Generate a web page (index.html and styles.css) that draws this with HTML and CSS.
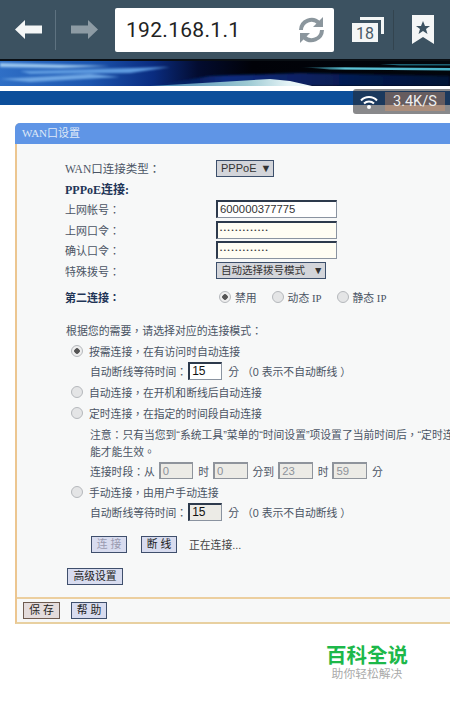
FILE: index.html
```html
<!DOCTYPE html>
<html lang="zh-Hant">
<head>
<meta charset="utf-8">
<title>WAN口设置</title>
<link rel="stylesheet" href="styles.css">
</head>
<body>
<header class="toolbar">
  <svg class="nav-icon" width="27" height="19" viewBox="0 0 27 19"><path d="M0 9.500 10 0V5.500H27V13.500H10V19Z" fill="#f4f6f6"/></svg>
  <div class="sep"></div>
  <svg class="nav-icon" width="27" height="19" viewBox="0 0 27 19"><path d="M27 9.500 17 0V5.500H0V13.500H17V19Z" fill="#8d9ba4"/></svg>
  <div class="url-box">
    <span class="url">192.168.1.1</span>
    <svg class="reload" width="27" height="28" viewBox="0 0 27 28"><path d="M3 14A10.500 10.500 0 0 1 21 7" fill="none" stroke="#8b969d" stroke-width="4"/><path d="M24 14A10.500 10.500 0 0 1 6 21" fill="none" stroke="#8b969d" stroke-width="4"/><path d="M25 1V11H15Z" fill="#8b969d"/><path d="M2 27V17H12Z" fill="#8b969d"/></svg>
  </div>
  <div class="tabs">
    <div class="tab-back"></div>
    <div class="tab-front">18</div>
  </div>
  <div class="sep sep-dark"></div>
  <svg class="bookmark" width="22" height="29" viewBox="0 0 22 29"><path d="M0 0H22V29L11 22 0 29Z" fill="#f4f6f6"/><path d="M11 6 13 11H18L14 14 15.500 19 11 16 6.500 19 8 14 4 11H9Z" fill="#3c5261"/></svg>
</header>
<svg class="banner" width="450" height="27" viewBox="0 0 450 27">
  <defs>
    <linearGradient id="sky" x1="0" x2="1" y1="0" y2="0">
      <stop offset="0" stop-color="#2f6fc6"/>
      <stop offset=".2" stop-color="#1c55ae"/>
      <stop offset=".34" stop-color="#0a2c80"/>
      <stop offset=".44" stop-color="#030c30"/>
      <stop offset=".56" stop-color="#010208"/>
      <stop offset="1" stop-color="#02060c"/>
    </linearGradient>
    <linearGradient id="low" x1="0" x2="1" y1="0" y2="0">
      <stop offset="0" stop-color="#0a2c80" stop-opacity="0"/>
      <stop offset=".25" stop-color="#0a2c80"/>
      <stop offset="1" stop-color="#071a50" stop-opacity=".6"/>
    </linearGradient>
    <linearGradient id="teal" x1="0" x2="1" y1="0" y2="0">
      <stop offset="0" stop-color="#39a8c0" stop-opacity="0"/>
      <stop offset=".3" stop-color="#5ec4d6"/>
      <stop offset="1" stop-color="#49b3c9"/>
    </linearGradient>
    <linearGradient id="foam" x1="0" x2="1" y1="0" y2="0">
      <stop offset="0" stop-color="#3f7fb0"/>
      <stop offset=".6" stop-color="#9cc9d2"/>
      <stop offset=".85" stop-color="#e4f3f6"/>
      <stop offset="1" stop-color="#f2fafb"/>
    </linearGradient>
    <filter id="b1"><feGaussianBlur stdDeviation="1"/></filter>
    <filter id="b2"><feGaussianBlur stdDeviation=".5"/></filter>
  </defs>
  <rect width="450" height="27" fill="url(#sky)"/>
  <path d="M150 27 210 17 300 14 450 17V27Z" fill="url(#low)" filter="url(#b1)"/>
  <g filter="url(#b1)">
    <path d="M0 4 110 7 60 9 0 8Z" fill="#9cc8f0"/>
    <path d="M20 12 170 8 130 14 30 15Z" fill="#5f9be0"/>
    <path d="M0 20 90 15 120 18 30 23Z" fill="#6ea6e4"/>
  </g>
  <path d="M300 8 450 9V11.500L330 10.500Z" fill="url(#teal)" filter="url(#b2)"/>
  <path d="M380 5 450 5V6.500L400 6.500Z" fill="#1d5f70" filter="url(#b2)"/>
  <path d="M150 27 220 23 270 20 290 22 312 27Z" fill="url(#foam)" filter="url(#b2)"/>
  <rect width="450" height="2" fill="#0a0f14"/>
</svg>
<div class="navstrip"></div>
<div class="speed">
  <svg width="18" height="14" viewBox="0 0 18 14"><path d="M1 5.500A11 11 0 0 1 17 5.500M4 8.500A7 7 0 0 1 14 8.500" fill="none" stroke="#fff" stroke-width="2"/><circle cx="9" cy="12" r="2" fill="#fff"/></svg>
  <span class="speed-text">3.4K/S</span>
</div>
<main class="card">
  <h1 class="card-title">WAN口设置</h1>
  <div class="card-body">
    <div class="row row-wan"><span class="label">WAN口连接类型：</span><span class="select select-short">PPPoE ▼</span></div>
    <div class="row row-sub"><b class="label strong">PPPoE连接:</b></div>
    <div class="row row-field"><span class="label">上网帐号：</span><span class="input input-wide">600000377775</span></div>
    <div class="row row-field"><span class="label">上网口令：</span><span class="input input-wide input-cream dots">•••••••••••••</span></div>
    <div class="row row-field"><span class="label">确认口令：</span><span class="input input-wide input-cream dots">•••••••••••••</span></div>
    <div class="row row-field"><span class="label">特殊拨号：</span><span class="select select-long">自动选择拨号模式 ▼</span></div>
    <div class="row row-second">
      <b class="label strong">第二连接：</b>
      <span class="radio-group">
        <span class="radio-item"><i class="radio on"></i>禁用</span>
        <span class="radio-item"><i class="radio"></i>动态 IP</span>
        <span class="radio-item"><i class="radio"></i>静态 IP</span>
      </span>
    </div>
    <p class="intro">根据您的需要，请选择对应的连接模式：</p>
    <div class="mode"><i class="radio on"></i>按需连接，在有访问时自动连接</div>
    <div class="sub">自动断线等待时间：<span class="input input-num">15</span>分 （0 表示不自动断线 ）</div>
    <div class="mode"><i class="radio"></i>自动连接，在开机和断线后自动连接</div>
    <div class="mode"><i class="radio"></i>定时连接，在指定的时间段自动连接</div>
    <div class="sub note">注意：只有当您到“系统工具”菜单的“时间设置”项设置了当前时间后，“定时连接”功</div>
    <div class="sub note-end">能才能生效。</div>
    <div class="sub time-row">连接时段：从<span class="input input-time off">0</span>时<span class="input input-time off">0</span>分到<span class="input input-time off">23</span>时<span class="input input-time off">59</span>分</div>
    <div class="mode"><i class="radio"></i>手动连接，由用户手动连接</div>
    <div class="sub">自动断线等待时间：<span class="input input-num off-num">15</span>分 （0 表示不自动断线 ）</div>
    <div class="actions">
      <span class="btn btn-off">连 接</span>
      <span class="btn">断 线</span>
      <span class="status">正在连接...</span>
    </div>
    <div class="advanced"><span class="btn btn-adv">高级设置</span></div>
  </div>
  <div class="card-foot">
    <span class="btn btn-save">保 存</span>
    <span class="btn">帮 助</span>
  </div>
</main>
<footer class="brand">
  <div class="brand-name">百科全说</div>
  <div class="brand-sub">助你轻松解决</div>
</footer>
</body>
</html>
```
FILE: styles.css
```css
* { box-sizing: border-box; }
html, body { margin: 0; padding: 0; }
body {
  width: 450px;
  height: 711px;
  overflow: hidden;
  position: relative;
  background: #fff;
  color: #4a5464;
  font-family: "Liberation Sans", "Noto Sans CJK TC", sans-serif;
  font-size: 10.8px;
}
.toolbar {
  height: 59px;
  background: #3c5261;
  display: flex;
  align-items: center;
  padding: 0 0 0 15px;
}
.sep { width: 1px; height: 40px; background: #5e7280; margin: 0 15px 0 13px; }
.sep-dark { background: #33444f; margin: 0 18px 0 9px; }
.nav-icon { flex: none; }
.url-box {
  width: 219px;
  height: 44px;
  margin-left: 17px;
  background: #fff;
  border-radius: 2px;
  display: flex;
  align-items: center;
  justify-content: space-between;
  padding: 0 9px 0 11px;
}
.url { font-family: "Roboto", sans-serif; font-size: 21px; color: #222; letter-spacing: 0.3px; }
.tabs { position: relative; width: 32px; height: 25px; margin-left: 18px; }
.tab-back { position: absolute; top: 0; right: 0; width: 24px; height: 17px; border: 3px solid #f4f6f6; border-width: 3px 3px 0 0; }
.tab-front {
  position: absolute; left: 0; bottom: 0; width: 26px; height: 19px;
  background: #f4f6f6; color: #4a5b66; border-top: 3px solid #f4f6f6;
  box-shadow: 1px -1px 0 #3c5261;
  font: 16px/16px "Roboto", sans-serif; text-align: center;
}
.banner { display: block; }
.navstrip { height: 14px; margin-top: 5px; background: #0c4e9a; }
.speed {
  position: absolute; left: 353px; top: 89px; width: 97px; height: 25px;
  background: rgba(40, 40, 44, 0.55); border-radius: 3px 0 0 3px;
  display: flex; align-items: center; padding-left: 7px; gap: 7px;
}
.speed-text {
  flex: 1; align-self: stretch; margin: 3px 5px 3px 0; padding-left: 8px;
  background: rgba(225, 150, 100, 0.38);
  color: #efefef; font: 14.500px/19px "Roboto", sans-serif;
}
.card {
  margin: 18px 0 0 15px;
  width: 435px;
  height: 501px;
  background: #f7f8f8;
  border-left: 2px solid #ecc690;
  border-bottom: 2px solid #e8d0a0;
  border-top-left-radius: 5px;
  display: flex;
  flex-direction: column;
}
.card-title {
  margin: 0 0 0 -2px;
  height: 21px;
  padding-left: 7px;
  background: #5f95e6;
  border-top-left-radius: 5px;
  color: #dfe9f7;
  font: normal 11px/20px "Liberation Serif", "Noto Sans CJK TC", serif;
}
.card-body { flex: 1; padding: 14px 0 0 48px; white-space: nowrap; }
.row { display: flex; align-items: center; }
.label { width: 151px; flex: none; font-size: 11px; }
.strong { font-weight: 700; color: #1f3557; }
.row-wan { height: 20px; }
.row-wan .label { font-family: "Liberation Serif", "Noto Sans CJK TC", serif; font-size: 11.500px; }
.row-sub { height: 21px; }
.row-sub .label { font-family: "Liberation Serif", "Noto Sans CJK TC", serif; font-size: 12px; }
.row-field { height: 20.500px; }
.row-second { height: 32px; }
.select, .input, .btn { display: inline-block; color: #333; }
.select {
  height: 17px; padding-left: 4px;
  background: #d3d5da;
  border: 1px solid #3c4f6b;
  font: 11px/15px "Liberation Sans", "Noto Sans CJK TC", sans-serif;
  word-spacing: 1px;
}
.select-short { width: 58px; }
.select-long { width: 110px; font-size: 10.500px; word-spacing: 5px; }
.input {
  height: 18px; background: #fff;
  border: 1px solid #8a93a0; border-top: 2px solid #2d3a4c; border-left: 2px solid #2d3a4c;
  font: 11.300px/15px "Liberation Sans", sans-serif; padding-left: 2px;
}
.input-wide { width: 121px; }
.input-cream { background: #fffdf3; }
.dots { font-size: 6px; letter-spacing: 1.700px; line-height: 14px; }
.radio-group { display: flex; gap: 15px; margin-left: 3px; }
.radio-item { display: flex; align-items: center; gap: 4px; font-size: 10.800px; font-family: "Liberation Serif", "Noto Sans CJK TC", serif; }
.radio {
  display: inline-block; flex: none; width: 12px; height: 12px; border-radius: 50%;
  background: #e4e5e6; border: 1px solid #b5b8bc;
}
.radio.on { background: radial-gradient(circle, #555 0 2.500px, #eee 3px); }
.intro { margin: 9px 0 0 1px; height: 18px; line-height: 18px; font-size: 10.900px; }
.mode { display: flex; align-items: center; height: 21px; padding-left: 6px; }
.mode .radio { margin-right: 6px; }
.sub { display: flex; align-items: center; height: 20.500px; padding-left: 25px; white-space: pre; }
.note { height: 20px; overflow: hidden; width: 385px; }
.note-end { height: 14px; }
.time-row { margin-top: 3px; }
.input-num { width: 34px; margin: 0 6px 0 1px; font-size: 12px; color: #111; }
.off-num { background: #ecebe6; }
.input-time { width: 34.500px; height: 17px; margin: 0 5px 0 4px; }
.off { background: #ecebe6; color: #8d929a; border-color: #8f949c; }
.actions { display: flex; align-items: center; gap: 14px; margin: 13px 0 0 26px; }
.btn {
  height: 17px; width: 36px; text-align: center;
  background: #d8dcef; color: #222;
  border: 1px solid #3f4f6c;
  font-size: 10.800px; line-height: 15px;
}
.btn-off { color: #9a9ab0; }
.status { margin-left: -2px; color: #444; }
.advanced { margin: 15px 0 0 2px; }
.btn-adv { width: 56px; }
.card-foot {
  height: 25px;
  margin-top: auto;
  border-top: 2px solid #eccf9f;
  padding-left: 6px;
  display: flex;
  align-items: center;
  gap: 11px;
}
.btn-save { width: 37px; background: #e4dcdc; border-color: #6e5b50; }
.brand { position: absolute; left: 326px; top: 643px; width: 82px; text-align: center; font-family: "Noto Sans CJK SC", sans-serif; }
.brand-name { font-size: 20.500px; line-height: 22px; font-weight: 700; color: #1db84a; white-space: nowrap; }
.brand-sub { font-size: 11.800px; line-height: 16px; color: #aaa; white-space: nowrap; }
```
